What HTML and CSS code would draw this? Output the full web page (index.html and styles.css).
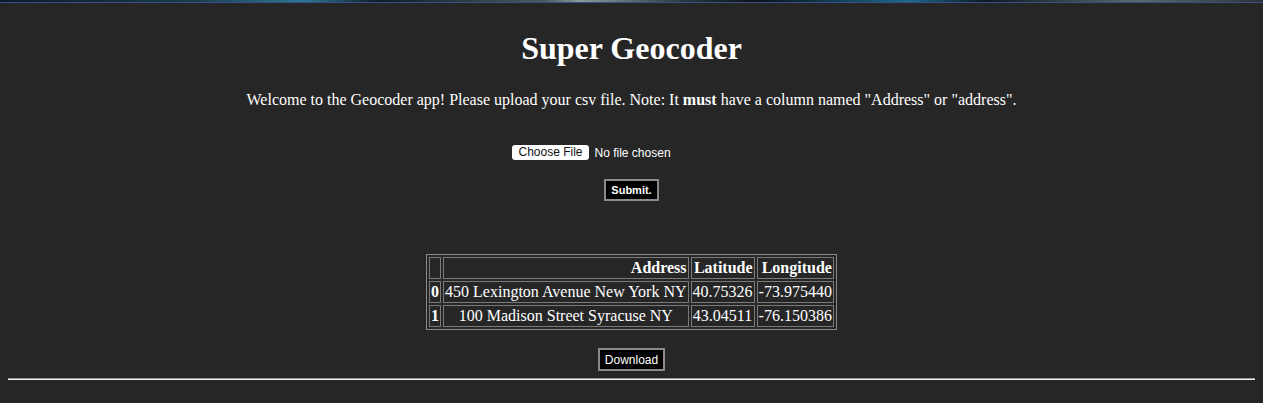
FILE: index.html
```html
<!DOCTYPE html>
<html lang="en">
<head>
<meta charset="utf-8">
<title>Super Geocoder</title>
<link rel="stylesheet" href="styles.css">
</head>
<body>
<div class="banner"></div>
<div class="page">
  <h1 class="title">Super Geocoder</h1>
  <p class="intro">Welcome to the Geocoder app! Please upload your csv file. Note: It <b>must</b> have a column named "Address" or "address".</p>
  <form class="upload">
    <div class="file-row">
      <span class="file-btn">Choose File</span><span class="file-name">No file chosen</span>
    </div>
    <div class="submit-row"><button type="button" class="btn btn-bold">Submit.</button></div>
  </form>
  <div class="table-wrap">
    <table class="data">
      <thead>
        <tr class="head-row"><th></th><th>Address</th><th>Latitude</th><th>Longitude</th></tr>
      </thead>
      <tbody>
        <tr><th>0</th><td>450 Lexington Avenue New York NY</td><td>40.75326</td><td>-73.975440</td></tr>
        <tr><th>1</th><td>100 Madison Street Syracuse NY</td><td>43.04511</td><td>-76.150386</td></tr>
      </tbody>
    </table>
  </div>
  <div class="download-row"><button type="button" class="btn btn-dl">Download</button></div>
  <hr class="rule">
</div>
</body>
</html>
```
FILE: styles.css
```css
html, body {
  margin: 0;
  padding: 0;
  background: #262626;
  color: #ffffff;
  font-family: "Liberation Serif", "Times New Roman", serif;
}
.banner {
  height: 2px;
  background: linear-gradient(to right, #0c1a26 0%, #1b3a4a 15%, #2a7890 24%, #101c28 30%, #4a5a5c 43%, #8a9a98 46%, #2a3a40 54%, #0a121a 60%, #1a6a88 72%, #0e1822 78%, #5a6a6a 90%, #2a3438 100%);
  border-bottom: 1px solid #3a4e8a;
}
.page {
  padding: 0 8px 20px;
}
.title {
  margin: 27px 0 0;
  font-size: 32px;
  font-weight: bold;
  text-align: center;
  line-height: 37px;
}
.intro {
  margin: 24px 0 0;
  font-size: 16px;
  line-height: 18px;
  text-align: center;
}
.upload {
  margin: 0;
}
.file-row {
  display: flex;
  justify-content: center;
  align-items: center;
  margin-top: 36px;
  font-family: "Liberation Sans", Arial, sans-serif;
  font-size: 12px;
  white-space: nowrap;
}
.file-btn {
  background: #ffffff;
  color: #111111;
  border-radius: 3px;
  height: 15px;
  line-height: 15px;
  padding: 0 6px;
}
.file-name {
  margin-left: 6px;
  width: 156px;
  color: #ffffff;
}
.submit-row {
  display: flex;
  justify-content: center;
  margin-top: 19px;
}
.btn {
  background: #000000;
  color: #ffffff;
  border: 2px solid #8a8a8a;
  font-family: "Liberation Sans", Arial, sans-serif;
  font-size: 11px;
  line-height: 13px;
  padding: 3px 5px 2px;
  margin: 0;
}
.btn-bold {
  font-weight: bold;
}
.table-wrap {
  display: flex;
  justify-content: center;
  margin-top: 53px;
}
.data {
  border: 1px solid #8a8a8a;
  border-spacing: 2px;
  font-size: 16px;
  line-height: 18px;
}
.data th, .data td {
  border: 1px solid #7a7a7a;
  padding: 1px;
}
.data td {
  text-align: center;
}
.head-row th {
  text-align: right;
}
.download-row {
  display: flex;
  justify-content: center;
  margin-top: 18px;
}
.btn-dl {
  padding: 3px 5px 2px;
  font-size: 12px;
  line-height: 14px;
}
.rule {
  margin: 7px 0 0;
  border: 0;
  border-top: 1px solid #9a9a9a;
  border-bottom: 1px solid #f0f0f0;
  height: 0;
}
```
